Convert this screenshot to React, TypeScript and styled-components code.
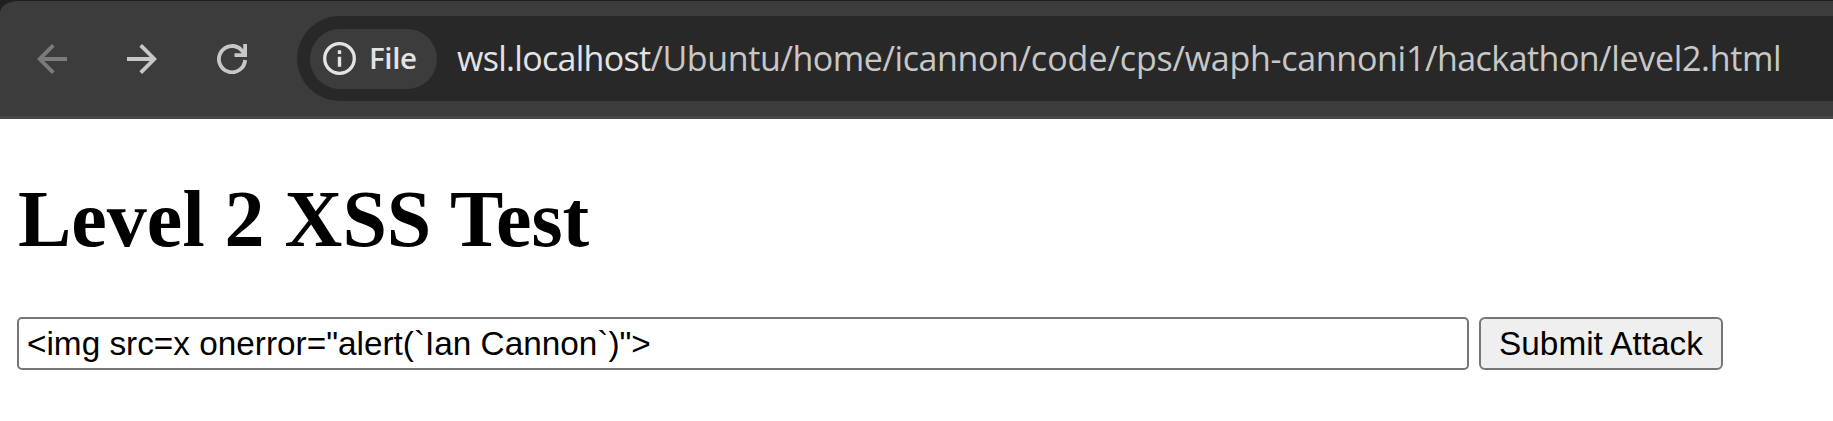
import React from "react";
import styled, { createGlobalStyle } from "styled-components";

const GlobalStyle = createGlobalStyle`
  html, body { margin: 0; padding: 0; background: #fff; }
  body { overflow: hidden; }
  * { box-sizing: border-box; }
`;

const Frame = styled.div`
  height: 421px;
  display: flex;
  flex-direction: column;
  overflow: hidden;
`;

const TabStrip = styled.div`
  background: #202020;
  padding-top: 1px;
`;

const Toolbar = styled.header`
  height: 118px;
  display: flex;
  align-items: center;
  padding-left: 37px;
  background: #3c3c3c;
  border-bottom: 3px solid #474747;
  border-top-left-radius: 18px 12px;
`;

const NavButton = styled.button<{ $dim?: boolean; $gap: number }>`
  display: flex;
  flex: none;
  width: 30px;
  height: 30px;
  padding: 0;
  border: 0;
  background: none;
  color: ${(p) => (p.$dim ? "#7b7b7b" : "#c7c7c7")};
  margin-right: ${(p) => p.$gap}px;
`;

const AddressBar = styled.div`
  flex: 1;
  height: 85px;
  display: flex;
  align-items: center;
  padding-left: 13px;
  border-radius: 43px 0 0 43px;
  background: #282828;
`;

const SchemeChip = styled.div`
  flex: none;
  width: 127px;
  height: 60px;
  display: flex;
  align-items: center;
  padding-left: 13px;
  gap: 13px;
  border-radius: 30px;
  background: #3c3c3c;
  color: #e3e3e3;
`;

const ChipLabel = styled.span`
  padding-bottom: 2px;
  font: 600 29.5px/40px "Open Sans", "Noto Sans", sans-serif;
  letter-spacing: -0.4px;
`;

const Url = styled.div`
  margin-left: 20px;
  padding-bottom: 2px;
  white-space: nowrap;
  font: 400 34px/48px "Open Sans", "Noto Sans", sans-serif;
  color: #c7c7c7;
`;

const UrlPart = styled.span<{ $tracking: number; $host?: boolean }>`
  letter-spacing: ${(p) => p.$tracking}px;
  color: ${(p) => (p.$host ? "#e3e3e3" : "inherit")};
`;

const Page = styled.main`
  padding: 0 17px;
`;

const Title = styled.h1`
  margin: 54px 0 52px;
  padding-left: 1px;
  font: 700 80px/92px "Liberation Serif", serif;
  color: #000;
`;

const AttackForm = styled.form`
  display: flex;
  gap: 10px;
`;

const AttackInput = styled.input`
  width: 1452px;
  height: 53px;
  padding: 2px 8px;
  border: 2px solid #767676;
  border-radius: 5px;
  outline: 0;
  background: #fff;
  color: #000;
  font: 33.333px "Liberation Sans", Arial, sans-serif;
`;

const SubmitButton = styled.button`
  width: 244px;
  height: 53px;
  padding: 0;
  border: 2px solid #767676;
  border-radius: 6px;
  background: #efefef;
  color: #000;
  white-space: nowrap;
  font: 33.333px "Liberation Sans", Arial, sans-serif;
`;

const BackIcon = () => (
  <svg width="30" height="30" viewBox="0 0 30 30" fill="none" stroke="currentColor" strokeWidth="3.8">
    <path d="M30 15H3M16.3 1.3 2.6 15l13.7 13.7" />
  </svg>
);

const ForwardIcon = () => (
  <svg width="30" height="30" viewBox="0 0 30 30" fill="none" stroke="currentColor" strokeWidth="3.8">
    <path d="M0 15h27M13.7 1.3 27.4 15 13.7 28.7" />
  </svg>
);

const ReloadIcon = () => (
  <svg width="30" height="30" viewBox="0 0 30 30" fill="none" stroke="currentColor" strokeWidth="3.8">
    <path d="M28.1 16A13.1 13.1 0 1 1 24.8 6.4L28 10.5M28.1 0V11.1H17.5" />
  </svg>
);

const InfoIcon = () => (
  <svg width="33" height="33" viewBox="0 0 33 33" fill="none" stroke="currentColor">
    <circle cx="16.5" cy="16.5" r="14.8" strokeWidth="3.3" />
    <path d="M16.5 14.7V24.7M16.5 8.3v3.6" strokeWidth="3.4" />
  </svg>
);

const pathParts: { text: string; tracking: number }[] = [
  { text: "/Ubuntu", tracking: -0.39 },
  { text: "/home", tracking: -0.46 },
  { text: "/icannon", tracking: -0.41 },
  { text: "/code", tracking: 0 },
  { text: "/cps", tracking: -0.17 },
  { text: "/waph-cannoni1", tracking: -0.29 },
  { text: "/hackathon", tracking: -0.55 },
  { text: "/level2.html", tracking: -0.33 },
];

export default function App() {
  return (
    <Frame>
      <GlobalStyle />
      <TabStrip>
        <Toolbar>
          <NavButton $dim $gap={60} aria-label="Back"><BackIcon /></NavButton>
          <NavButton $gap={60} aria-label="Forward"><ForwardIcon /></NavButton>
          <NavButton $gap={50} aria-label="Reload"><ReloadIcon /></NavButton>
          <AddressBar>
            <SchemeChip>
              <InfoIcon />
              <ChipLabel>File</ChipLabel>
            </SchemeChip>
            <Url>
              <UrlPart $host $tracking={-0.7}>wsl.localhost</UrlPart>
              {pathParts.map((p) => (
                <UrlPart key={p.text} $tracking={p.tracking}>{p.text}</UrlPart>
              ))}
            </Url>
          </AddressBar>
        </Toolbar>
      </TabStrip>
      <Page>
        <Title>Level 2 XSS Test</Title>
        <AttackForm onSubmit={(e) => e.preventDefault()}>
          <AttackInput defaultValue={'<img src=x onerror="alert(`Ian Cannon`)">'} />
          <SubmitButton>Submit Attack</SubmitButton>
        </AttackForm>
      </Page>
    </Frame>
  );
}
